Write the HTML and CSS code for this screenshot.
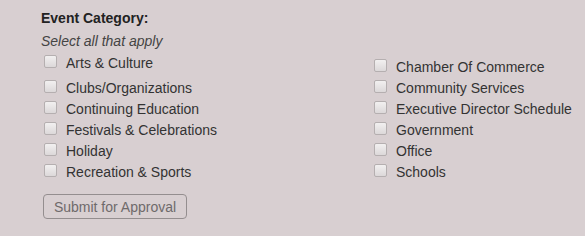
FILE: index.html
```html
<!DOCTYPE html>
<html lang="en">
<head>
  <meta charset="UTF-8" />
  <title>Event Category</title>
  <link rel="stylesheet" href="styles.css">
</head>
<body>
  <form class="category-form">
    <div class="form-label">Event Category:</div>
    <div class="form-hint">Select all that apply</div>

    <div class="check-grid">
      <div class="check-col left">
        <label class="check-item"><input type="checkbox"><span>Arts &amp; Culture</span></label>
        <label class="check-item"><input type="checkbox"><span>Clubs/Organizations</span></label>
        <label class="check-item"><input type="checkbox"><span>Continuing Education</span></label>
        <label class="check-item"><input type="checkbox"><span>Festivals &amp; Celebrations</span></label>
        <label class="check-item"><input type="checkbox"><span>Holiday</span></label>
        <label class="check-item"><input type="checkbox"><span>Recreation &amp; Sports</span></label>
      </div>
      <div class="check-col right">
        <label class="check-item"><input type="checkbox"><span>Chamber Of Commerce</span></label>
        <label class="check-item"><input type="checkbox"><span>Community Services</span></label>
        <label class="check-item"><input type="checkbox"><span>Executive Director Schedule</span></label>
        <label class="check-item"><input type="checkbox"><span>Government</span></label>
        <label class="check-item"><input type="checkbox"><span>Office</span></label>
        <label class="check-item"><input type="checkbox"><span>Schools</span></label>
      </div>
    </div>

    <button type="button" class="submit-btn" disabled>Submit for Approval</button>
  </form>
</body>
</html>
```

FILE: styles.css
```css
body {
  margin: 0;
  background: #d8cfd1;
  font-family: "Liberation Sans", Arial, sans-serif;
  font-size: 14px;
  color: #333;
}

.category-form {
  padding: 8px 0 0 41px;
}

.form-label {
  font-weight: bold;
  color: #222;
  line-height: 20px;
}

.form-hint {
  font-style: italic;
  color: #444;
  line-height: 20px;
  margin-top: 3px;
}

.check-grid {
  display: grid;
  grid-template-columns: 330px auto;
  margin-top: 1px;
}

.check-col.left .check-item:first-child {
  margin-bottom: 4px;
}

.check-col.right {
  padding-top: 4px;
}

.check-item {
  display: flex;
  align-items: center;
  height: 21px;
  white-space: nowrap;
}

.check-item input {
  appearance: none;
  -webkit-appearance: none;
  width: 13px;
  height: 13px;
  margin: 0 9px 2px 3px;
  border: 1px solid #b5afb0;
  border-radius: 2px;
  background: linear-gradient(#f2f0f0, #dcd8d9);
  box-sizing: border-box;
}

.submit-btn {
  margin: 12px 0 0 2px;
  width: 144px;
  height: 25px;
  padding: 0;
  font-family: inherit;
  font-size: 14px;
  color: #6f6a6b;
  background: transparent;
  border: 1px solid #948e8f;
  border-radius: 4px;
}
```
